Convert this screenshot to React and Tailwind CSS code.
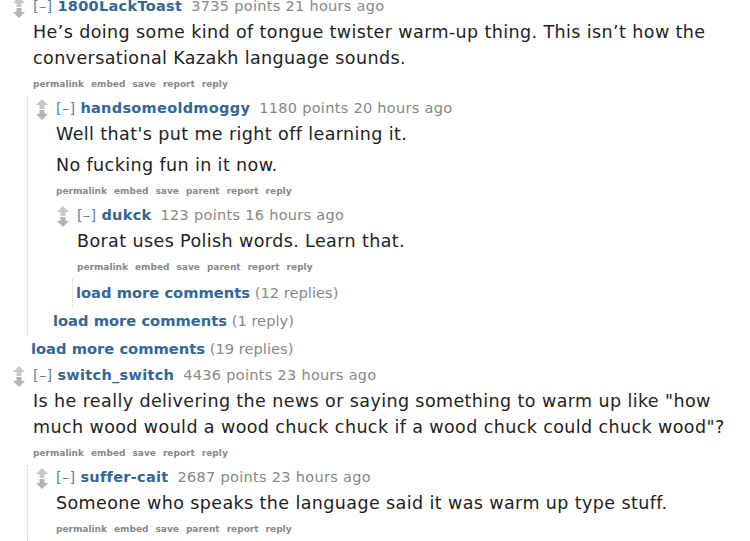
import React from 'react';

const FONT = { fontFamily: '"DejaVu Sans", Verdana, sans-serif' };

function Arrows() {
  return (
    <div className="w-[20px] shrink-0 pt-[3px]">
      <svg width="12" height="21" viewBox="0 0 12 21">
        <path d="M6 0 L12 6 L8.5 6 L8.5 10 L3.5 10 L3.5 6 L0 6 Z" fill="#c8c8c8" />
        <path d="M6 21 L12 15 L8.5 15 L8.5 11 L3.5 11 L3.5 15 L0 15 Z" fill="#b4b4b4" />
      </svg>
    </div>
  );
}

function Buttons({ parent }) {
  const items = parent
    ? ['permalink', 'embed', 'save', 'parent', 'report', 'reply']
    : ['permalink', 'embed', 'save', 'report', 'reply'];
  return (
    <ul className="flex h-[25px] items-center gap-[7px] pt-[3px] text-[9px] font-bold text-[#888]">
      {items.map((b) => (
        <li key={b}>{b}</li>
      ))}
    </ul>
  );
}

function Comment({ author, points, time, body, parent }) {
  return (
    <div className="flex">
      <Arrows />
      <div className="min-w-0 flex-1">
        <p className="h-[25px] whitespace-nowrap text-[14.5px] leading-[25px] tracking-[0.3px] text-[#888]">
          <span className="text-[#5f7fa5]">[–]</span>{' '}
          <span className="font-bold text-[#336699]">{author}</span>
          <span className="ml-[9px]">{points} points {time}</span>
        </p>
        <div className="space-y-[5px] text-[17.5px] leading-[26px] tracking-[0.4px] text-[#222]">
          {body.map((t, i) => (
            <p key={i}>{t}</p>
          ))}
        </div>
        <Buttons parent={parent} />
      </div>
    </div>
  );
}

function LoadMore({ count }) {
  return (
    <p className="h-[28px] whitespace-nowrap text-[14.7px] leading-[28px] text-[#888]">
      <span className="font-bold text-[#336699]">load more comments</span> ({count})
    </p>
  );
}

export default function App() {
  return (
    <div className="h-[541px] overflow-hidden bg-white" style={FONT}>
      <div className="-mt-[6.5px] pl-[13px] pr-[10px]">
        <Comment
          author="1800LackToast"
          points="3735"
          time="21 hours ago"
          body={[
            'He’s doing some kind of tongue twister warm-up thing. This isn’t how the conversational Kazakh language sounds.',
          ]}
        />
        <div className="ml-[14px] border-l border-dotted border-[#d0d0d0] pl-[8px]">
          <Comment
            author="handsomeoldmoggy"
            points="1180"
            time="20 hours ago"
            parent
            body={["Well that's put me right off learning it.", 'No fucking fun in it now.']}
          />
          <div className="ml-[13px] pl-[8px]">
            <Comment
              author="dukck"
              points="123"
              time="16 hours ago"
              parent
              body={['Borat uses Polish words. Learn that.']}
            />
            <div className="ml-[15px] border-l border-dotted border-[#d0d0d0] pl-[3px]">
              <LoadMore count="12 replies" />
            </div>
          </div>
          <div className="pl-[17px]">
            <LoadMore count="1 reply" />
          </div>
        </div>
        <div className="pl-[18px]">
          <LoadMore count="19 replies" />
        </div>
        <Comment
          author="switch_switch"
          points="4436"
          time="23 hours ago"
          body={[
            'Is he really delivering the news or saying something to warm up like "how much wood would a wood chuck chuck if a wood chuck could chuck wood"?',
          ]}
        />
        <div className="ml-[14px] border-l border-dotted border-[#d0d0d0] pl-[8px]">
          <Comment
            author="suffer-cait"
            points="2687"
            time="23 hours ago"
            parent
            body={['Someone who speaks the language said it was warm up type stuff.']}
          />
        </div>
      </div>
    </div>
  );
}
